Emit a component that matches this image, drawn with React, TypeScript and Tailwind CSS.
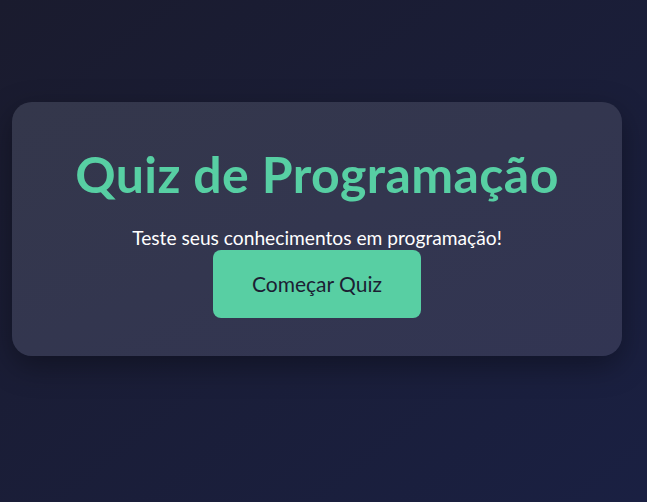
export default function App() {
  return (
    <div
      className="min-h-[502px] w-full bg-gradient-to-br from-[#1a1b2e] to-[#1a2042] pt-[102px]"
      style={{ fontFamily: "Lato, 'Noto Sans', sans-serif" }}
    >
      <div className="ml-3 w-[610px] h-[254px] rounded-[20px] bg-gradient-to-br from-[#34374b] to-[#323553] shadow-[0_10px_30px_rgba(0,0,0,0.35)] flex flex-col items-center pt-[42px]">
        <h1 className="text-[50px] leading-[60px] font-bold text-[#57cfa3] tracking-[0.4px]">
          Quiz de Programação
        </h1>
        <p className="mt-[22px] text-[19.2px] leading-[23px] text-white">
          Teste seus conhecimentos em programação!
        </p>
        <button className="mt-[1px] w-[208px] h-[68px] rounded-[8px] bg-[#58cfa3] text-[#1c1e33] text-[21px]">
          Começar Quiz
        </button>
      </div>
    </div>
  );
}
